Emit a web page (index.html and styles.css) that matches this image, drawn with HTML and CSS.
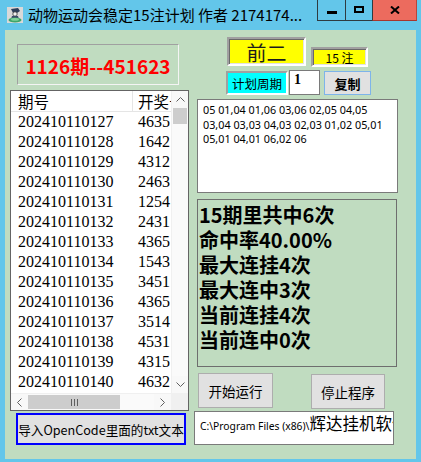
FILE: index.html
```html
<!DOCTYPE html>
<html lang="zh-CN">
<head>
<meta charset="utf-8">
<title>动物运动会稳定15注计划</title>
<link rel="stylesheet" href="styles.css">
</head>
<body>
<div class="window">
  <div class="titlebar">
    <svg class="app-icon" viewBox="0 0 16 16" width="16" height="16">
      <rect x="0" y="0" width="16" height="16" fill="#d9d9d9"/>
      <path d="M4 2 L11 1 L13 4 L10 6 L6 6 Z" fill="#2c3e5a"/>
      <circle cx="8" cy="7" r="2.2" fill="#f1f1f1" stroke="#333" stroke-width="0.8"/>
      <path d="M5 9 L11 9 L12 12 L4 12 Z" fill="#3a4a6a"/>
      <ellipse cx="8" cy="13" rx="6.5" ry="2.6" fill="#3fa56a"/>
      <ellipse cx="8" cy="12.4" rx="4" ry="1.3" fill="#7fd39a"/>
    </svg>
    <span class="title">动物运动会稳定15注计划 作者 2174174...</span>
    <div class="caption-btns">
      <div class="cap min"><span class="min-glyph"></span></div>
      <div class="cap max"><span class="max-glyph"></span></div>
      <div class="cap close">
        <svg viewBox="0 0 10 8" width="10" height="8"><path d="M1 0.5 L9 7.5 M9 0.5 L1 7.5" stroke="#000" stroke-width="2"/></svg>
      </div>
    </div>
  </div>

  <div class="client">
    <div class="left">
      <div class="period-label">1126期--451623</div>

      <div class="listview">
        <div class="lv-content">
          <div class="lv-header"><span class="c1">期号</span><span class="c2 hdr2">开奖号码</span></div>
          <div class="lv-row"><span class="c1">202410110127</span><span class="c2">4635</span></div>
          <div class="lv-row"><span class="c1">202410110128</span><span class="c2">1642</span></div>
          <div class="lv-row"><span class="c1">202410110129</span><span class="c2">4312</span></div>
          <div class="lv-row"><span class="c1">202410110130</span><span class="c2">2463</span></div>
          <div class="lv-row"><span class="c1">202410110131</span><span class="c2">1254</span></div>
          <div class="lv-row"><span class="c1">202410110132</span><span class="c2">2431</span></div>
          <div class="lv-row"><span class="c1">202410110133</span><span class="c2">4365</span></div>
          <div class="lv-row"><span class="c1">202410110134</span><span class="c2">1543</span></div>
          <div class="lv-row"><span class="c1">202410110135</span><span class="c2">3451</span></div>
          <div class="lv-row"><span class="c1">202410110136</span><span class="c2">4365</span></div>
          <div class="lv-row"><span class="c1">202410110137</span><span class="c2">3514</span></div>
          <div class="lv-row"><span class="c1">202410110138</span><span class="c2">4531</span></div>
          <div class="lv-row"><span class="c1">202410110139</span><span class="c2">4315</span></div>
          <div class="lv-row"><span class="c1">202410110140</span><span class="c2">4632</span></div>
        </div>
        <div class="vscroll">
          <div class="sb-arrow">
            <svg viewBox="0 0 9 5" width="9" height="5"><polyline points="0.5,4.5 4.5,0.5 8.5,4.5" fill="none" stroke="#606060" stroke-width="1"/></svg>
          </div>
          <div class="vthumb"></div>
          <div class="vtrack"></div>
          <div class="sb-arrow">
            <svg viewBox="0 0 9 5" width="9" height="5"><polyline points="0.5,0.5 4.5,4.5 8.5,0.5" fill="none" stroke="#606060" stroke-width="1"/></svg>
          </div>
        </div>
        <div class="hscroll">
          <div class="sb-arrow h">
            <svg viewBox="0 0 5 9" width="5" height="9"><polyline points="4.5,0.5 0.5,4.5 4.5,8.5" fill="none" stroke="#606060" stroke-width="1"/></svg>
          </div>
          <div class="hthumb"><span class="grip"></span><span class="grip"></span><span class="grip"></span></div>
          <div class="htrack"></div>
          <div class="sb-arrow h">
            <svg viewBox="0 0 5 9" width="5" height="9"><polyline points="0.5,0.5 4.5,4.5 0.5,8.5" fill="none" stroke="#606060" stroke-width="1"/></svg>
          </div>
        </div>
        <div class="corner"></div>
      </div>

      <button class="import-btn">导入OpenCode里面的txt文本</button>
    </div>

    <div class="right">
      <div class="row-top">
        <div class="plan-name sunken">前二</div>
        <div class="bet-count sunken">15&nbsp;注</div>
      </div>
      <div class="row-period">
        <div class="period-tag">计划周期</div>
        <div class="period-input">1</div>
        <button class="copy-btn">复制</button>
      </div>
      <div class="numbers-box">
        <div class="nl">05 01,04 01,06 03,06 02,05 04,05</div>
        <div class="nl">03,04 03,03 04,03 02,03 01,02 05,01</div>
        <div class="nl">05,01 04,01 06,02 06</div>
      </div>
      <div class="stats-box">
        <div class="sl">15期里共中6次</div>
        <div class="sl">命中率40.00%</div>
        <div class="sl">最大连挂4次</div>
        <div class="sl">最大连中3次</div>
        <div class="sl">当前连挂4次</div>
        <div class="sl">当前连中0次</div>
      </div>
      <div class="row-actions">
        <button class="act-btn start">开始运行</button>
        <button class="act-btn stop">停止程序</button>
      </div>
      <div class="path-box"><span class="lat">C:\Program Files (x86)\</span><span class="cjk">辉达挂机软件</span></div>
    </div>
  </div>
</div>
</body>
</html>
```
FILE: styles.css
```css
* { box-sizing: border-box; }

html, body {
  margin: 0;
  padding: 0;
  background: #63c6ea;
}

body {
  font-family: "Noto Sans CJK SC", "Noto Sans", sans-serif;
  color: #000;
}

.window {
  width: 421px;
  height: 462px;
  background: #63c6ea;
  display: flex;
  flex-direction: column;
  overflow: hidden;
}

/* ---------- title bar ---------- */
.titlebar {
  height: 30px;
  display: flex;
  align-items: flex-start;
  flex: none;
}

.app-icon {
  margin: 7px 0 0 7px;
  flex: none;
}

.title {
  margin: 5px 0 0 5px;
  font-size: 15px;
  line-height: 19px;
  white-space: nowrap;
  color: #000;
}

.caption-btns {
  margin-left: auto;
  margin-right: 4px;
  display: flex;
  height: 21px;
}

.cap {
  height: 21px;
  border-left: 1px solid #2f3b40;
  border-bottom: 1px solid #2f3b40;
  display: flex;
  align-items: center;
  justify-content: center;
}

.min { width: 28px; }
.max { width: 27px; }
.close {
  width: 45px;
  background: #ec6b5e;
  border-left-color: #2f3b40;
  border-bottom-color: #a8352c;
  border-right: 1px solid #b8453a;
}

.min-glyph {
  display: block;
  width: 10px;
  height: 3px;
  background: #000;
  margin-top: 5px;
}

.max-glyph {
  display: block;
  width: 10px;
  height: 7px;
  border: 2px solid #000;
  margin-top: -1px;
}

.close svg { margin-top: -1px; }

/* ---------- client ---------- */
.client {
  margin: 0 5px;
  height: 429px;
  background: #c0dcc0;
  display: flex;
  flex: none;
}

.left {
  width: 184px;
  padding-left: 5px;
  display: flex;
  flex-direction: column;
  align-items: flex-start;
  flex: none;
}

.period-label {
  margin: 14px 0 0 7px;
  width: 162px;
  height: 41px;
  border: 1px solid;
  border-color: #a0a0a0 #f4f4f4 #f4f4f4 #a0a0a0;
  color: #ff0000;
  font-weight: 700;
  font-size: 19px;
  display: flex;
  align-items: center;
  justify-content: center;
  padding-top: 1px;
  white-space: nowrap;
}

/* ---------- list view ---------- */
.listview {
  margin-top: 5px;
  width: 179px;
  height: 321px;
  border: 1px solid #646464;
  background: #fff;
  display: grid;
  grid-template-columns: 160px 17px;
  grid-template-rows: 302px 17px;
}

.lv-content {
  overflow: hidden;
  font-family: "Liberation Serif", "Noto Sans CJK SC", serif;
  font-size: 16px;
}

.lv-header {
  height: 21px;
  display: flex;
  border-bottom: 1px solid #e5e5e5;
  background: #fff;
  overflow: hidden;
}

.lv-header .c1 {
  border-right: 1px solid #e5e5e5;
  font-family: "Noto Sans CJK SC", sans-serif;
  font-size: 15.5px;
  line-height: 20px;
}

.lv-header .c2 {
  font-family: "Noto Sans CJK SC", sans-serif;
  font-size: 15.5px;
  line-height: 20px;
}

.lv-row {
  height: 20px;
  display: flex;
  line-height: 20px;
}

.c1 {
  width: 122px;
  padding-left: 7px;
  flex: none;
  white-space: nowrap;
}

.c2 {
  padding-left: 5px;
  white-space: nowrap;
  flex: none;
}

.vscroll {
  background: #fafafa;
  border-left: 1px solid #f0f0f0;
  display: flex;
  flex-direction: column;
}

.sb-arrow {
  height: 17px;
  display: flex;
  align-items: center;
  justify-content: center;
  background: #f8f8f8;
  flex: none;
}

.sb-arrow.h {
  width: 17px;
  height: 16px;
}

.vthumb {
  height: 16px;
  margin: 0 1px;
  background: #cdcdcd;
  flex: none;
}

.vtrack { flex: 1; background: #fafafa; }

.hscroll {
  display: flex;
  background: #fafafa;
  border-top: 1px solid #f0f0f0;
}

.hthumb {
  width: 92px;
  margin: 1px 0;
  background: #cdcdcd;
  display: flex;
  align-items: center;
  justify-content: center;
  gap: 2px;
  flex: none;
}

.grip {
  width: 1px;
  height: 7px;
  background: #606060;
}

.htrack { flex: 1; background: #fafafa; }

.corner { background: #f0f0f0; }

/* ---------- buttons ---------- */
button {
  font-family: "Noto Sans CJK SC", sans-serif;
  color: #000;
  padding: 0;
  margin: 0;
  cursor: default;
}

.import-btn {
  margin: 2px 0 0 6px;
  width: 170px;
  height: 32px;
  background: #e1e1e1;
  border: 2px solid #0000ff;
  font-size: 12.6px;
  white-space: nowrap;
}

/* ---------- right column ---------- */
.right {
  margin-left: 5px;
  width: 222px;
  display: flex;
  flex-direction: column;
  align-items: flex-start;
  flex: none;
}

.sunken {
  border: 2px solid;
  border-color: #a0a0a0 #ffffff #ffffff #a0a0a0;
  box-shadow: inset 1px 1px 0 #696969, inset -1px -1px 0 #e3e3e3;
  background: #ffff00;
  display: flex;
  align-items: center;
  justify-content: center;
}

.row-top {
  margin-top: 7px;
  padding-left: 33px;
  display: flex;
  align-items: flex-start;
}

.plan-name {
  width: 79px;
  height: 29px;
  font-size: 20px;
  color: #1c1c1c;
  padding-top: 1px;
}

.bet-count {
  margin: 10px 0 0 5px;
  width: 57px;
  height: 20px;
  font-size: 12px;
  padding-top: 1px;
  white-space: nowrap;
}

.row-period {
  margin-top: 3px;
  padding-left: 32px;
  display: flex;
  align-items: flex-start;
}

.period-tag {
  margin-top: 1px;
  width: 62px;
  height: 24px;
  background: #00ffff;
  border: 2px solid;
  border-color: #a0a0a0 #ffffff #ffffff #a0a0a0;
  font-size: 12.5px;
  display: flex;
  align-items: center;
  justify-content: center;
  white-space: nowrap;
}

.period-input {
  margin-left: 1px;
  width: 31px;
  height: 25px;
  background: #fff;
  border: 1px solid #7a7a7a;
  font-family: "Liberation Serif", serif;
  font-weight: 700;
  font-size: 14px;
  padding: 1px 0 0 4px;
  line-height: 16px;
}

.copy-btn {
  margin: 1px 0 0 4px;
  width: 47px;
  height: 24px;
  background: #e1e1e1;
  border: 1px solid #7eb4ea;
  font-size: 13px;
  font-weight: 700;
}

.numbers-box {
  margin: 4px 0 0 3px;
  width: 201px;
  height: 94px;
  background: #fff;
  border: 1px solid #7a7a7a;
  padding: 3px 0 0 5px;
  font-family: "Noto Sans", sans-serif;
  font-size: 10.8px;
  line-height: 14.5px;
  overflow: hidden;
}

.nl { white-space: nowrap; }

.stats-box {
  margin: 6px 0 0 3px;
  width: 200px;
  height: 168px;
  border: 1px solid #6e6e6e;
  padding: 2px 0 0 1px;
  font-size: 20px;
  font-weight: 700;
  line-height: 25px;
}

.sl {
  white-space: nowrap;
  height: 25px;
}

.row-actions {
  margin-top: 6px;
  padding-left: 4px;
  display: flex;
  align-items: flex-start;
}

.act-btn {
  width: 75px;
  height: 35px;
  background: #e1e1e1;
  border: 1px solid #adadad;
  font-size: 13.5px;
}

.act-btn.stop {
  width: 74px;
  margin: 1px 0 0 38px;
}

.path-box {
  margin-top: 2px;
  width: 200px;
  height: 34px;
  background: #fff;
  border: 1px solid #7a7a7a;
  padding: 2px 0 0 5px;
  white-space: nowrap;
  overflow: hidden;
  line-height: 18px;
}

.path-box .lat {
  font-family: "Noto Sans", sans-serif;
  font-size: 10.3px;
}

.path-box .cjk {
  font-size: 16.5px;
}
```
